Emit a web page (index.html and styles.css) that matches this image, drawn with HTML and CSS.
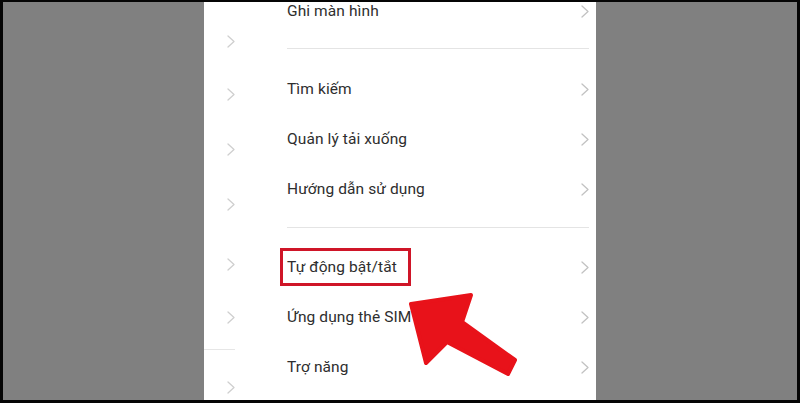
FILE: index.html
```html
<!DOCTYPE html>
<html lang="vi">
<head>
<meta charset="utf-8">
<title>Cài đặt bổ sung</title>
<link rel="stylesheet" href="styles.css">
</head>
<body>
<div class="frame">
  <div class="stage">
    <div class="side"></div>
    <div class="screen">
      <div class="ghost">
        <div class="g g1"><svg class="chev ghost-chev" viewBox="0 0 8 13"><polyline points="1,1 7,6.5 1,12"/></svg></div>
        <div class="g g2"><svg class="chev ghost-chev" viewBox="0 0 8 13"><polyline points="1,1 7,6.5 1,12"/></svg></div>
        <div class="g g3"><svg class="chev ghost-chev" viewBox="0 0 8 13"><polyline points="1,1 7,6.5 1,12"/></svg></div>
        <div class="g g4"><svg class="chev ghost-chev" viewBox="0 0 8 13"><polyline points="1,1 7,6.5 1,12"/></svg></div>
        <div class="g g5"><svg class="chev ghost-chev" viewBox="0 0 8 13"><polyline points="1,1 7,6.5 1,12"/></svg></div>
        <div class="g g6"><svg class="chev ghost-chev" viewBox="0 0 8 13"><polyline points="1,1 7,6.5 1,12"/></svg></div>
        <div class="gline"></div>
        <div class="g g7"><svg class="chev ghost-chev" viewBox="0 0 8 13"><polyline points="1,1 7,6.5 1,12"/></svg></div>
      </div>
      <div class="list">
        <div class="row"><span class="label">Ghi màn hình</span><svg class="chev" viewBox="0 0 8 13"><polyline points="1,1 7,6.5 1,12"/></svg></div>
        <div class="sep sep1"></div>
        <div class="row"><span class="label">Tìm kiếm</span><svg class="chev" viewBox="0 0 8 13"><polyline points="1,1 7,6.5 1,12"/></svg></div>
        <div class="row"><span class="label">Quản lý tải xuống</span><svg class="chev" viewBox="0 0 8 13"><polyline points="1,1 7,6.5 1,12"/></svg></div>
        <div class="row"><span class="label">Hướng dẫn sử dụng</span><svg class="chev" viewBox="0 0 8 13"><polyline points="1,1 7,6.5 1,12"/></svg></div>
        <div class="sep sep2"></div>
        <div class="row"><span class="label">Tự động bật/tắt</span><svg class="chev" viewBox="0 0 8 13"><polyline points="1,1 7,6.5 1,12"/></svg></div>
        <div class="row"><span class="label">Ứng dụng thẻ SIM</span><svg class="chev" viewBox="0 0 8 13"><polyline points="1,1 7,6.5 1,12"/></svg></div>
        <div class="row"><span class="label">Trợ năng</span><svg class="chev" viewBox="0 0 8 13"><polyline points="1,1 7,6.5 1,12"/></svg></div>
      </div>
    </div>
    <div class="side"></div>
  </div>
  <svg class="annot" viewBox="0 0 800 403" width="800" height="403">
    <rect class="hl" x="281.5" y="249.5" width="128" height="35"/>
    <polygon class="arrow" points="411,304 471,295 462,322 515,360 508,374 447,342 426,363"/>
  </svg>
</div>
</body>
</html>
```

FILE: styles.css
```css
html, body {
  margin: 0;
  padding: 0;
  background: #000;
}
.frame {
  position: relative;
  width: 800px;
  height: 403px;
  box-sizing: border-box;
  padding: 2px 3px 3px 3px;
  background: #050505;
  overflow: hidden;
}
.stage {
  display: flex;
  height: 398px;
}
.side {
  width: 201px;
  flex: none;
  background: #808080;
}
.screen {
  width: 392px;
  flex: none;
  background: #fff;
  display: flex;
  overflow: hidden;
}
.ghost {
  width: 83px;
  flex: none;
  display: flex;
  flex-direction: column;
}
.g {
  height: 13px;
  padding-left: 23px;
  display: flex;
  align-items: center;
}
.g1 { margin-top: 33px; }
.g2 { margin-top: 40px; }
.g3 { margin-top: 42px; }
.g4 { margin-top: 42px; }
.g5 { margin-top: 47px; }
.g6 { margin-top: 40px; }
.g7 { margin-top: 31px; }
.gline {
  margin-top: 25px;
  width: 31px;
  height: 1px;
  background: #e6e6e6;
}
.list {
  flex: 1;
  display: flex;
  flex-direction: column;
  margin-top: -16px;
  padding-right: 7px;
}
.row {
  height: 50px;
  flex: none;
  display: flex;
  align-items: center;
  justify-content: space-between;
}
.label {
  font-family: Roboto, "Noto Sans", "Liberation Sans", sans-serif;
  font-size: 15.5px;
  color: #2e2e2e;
  letter-spacing: 0.1px;
}
.sep {
  flex: none;
  height: 28px;
  box-sizing: border-box;
  border-bottom: 0;
  position: relative;
}
.sep::after {
  content: "";
  display: block;
  height: 1px;
  background: #e4e4e4;
}
.sep1 { padding-top: 12px; }
.sep2 { padding-top: 13px; }
.chev {
  width: 8px;
  height: 13px;
  flex: none;
  fill: none;
  stroke: #c2c2c2;
  stroke-width: 1.3;
  stroke-linecap: round;
  stroke-linejoin: round;
}
.ghost-chev {
  stroke: #cfcfcf;
}
.annot {
  position: absolute;
  left: 0;
  top: 0;
  pointer-events: none;
}
.hl {
  fill: none;
  stroke: #cf1528;
  stroke-width: 3;
}
.arrow {
  fill: #e8121a;
  stroke: #e8121a;
  stroke-width: 4;
  stroke-linejoin: round;
}
```
